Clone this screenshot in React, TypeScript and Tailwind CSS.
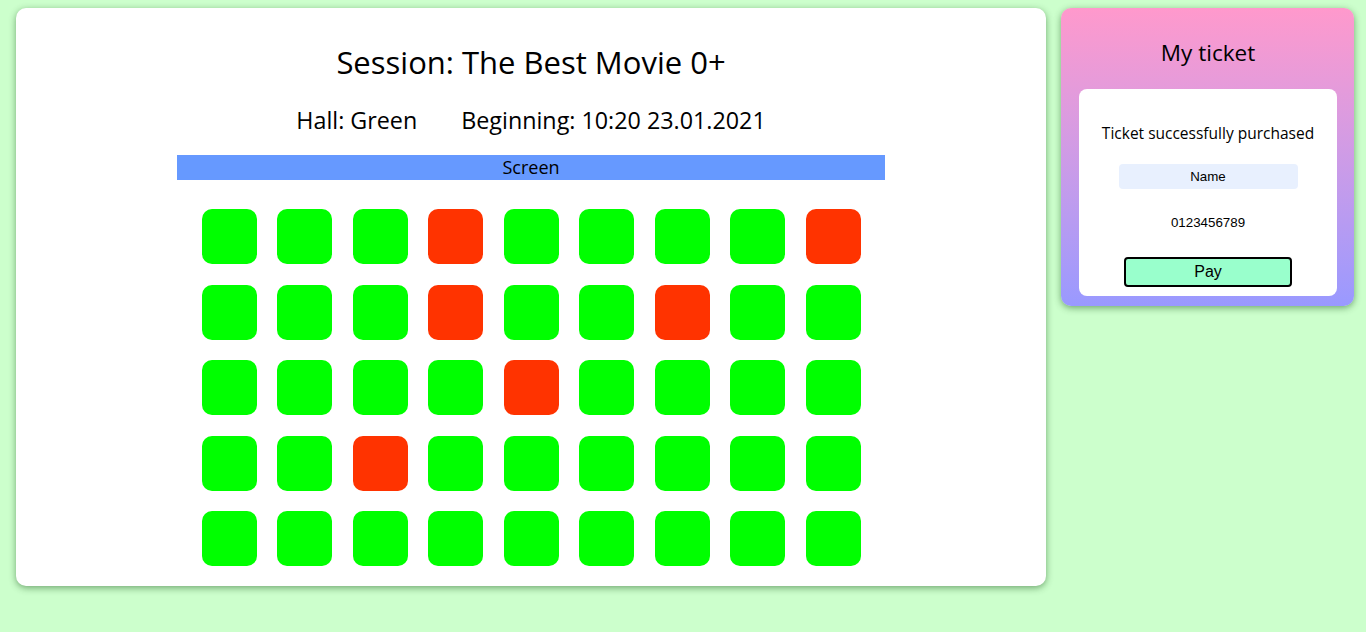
const seatRows: number[][] = [
  [0, 0, 0, 1, 0, 0, 0, 0, 1],
  [0, 0, 0, 1, 0, 0, 1, 0, 0],
  [0, 0, 0, 0, 1, 0, 0, 0, 0],
  [0, 0, 1, 0, 0, 0, 0, 0, 0],
  [0, 0, 0, 0, 0, 0, 0, 0, 0],
];

const Seat = ({ taken }: { taken: boolean }) => (
  <div className={`w-[55px] h-[55px] rounded-[10px] ${taken ? 'bg-[#ff3300]' : 'bg-[#00ff00]'}`} />
);

const SessionCard = () => (
  <div className="w-[1030px] h-[578px] bg-white rounded-[10px] shadow-[0_2px_7px_rgba(0,60,0,0.45)] flex flex-col items-center pt-[34px] font-['Open_Sans',sans-serif] text-black">
    <h1 className="text-[31px] leading-[40px]">Session: The Best Movie 0+</h1>
    <div className="mt-[22px] flex gap-[44px] text-[23.3px] leading-[32px]">
      <span>Hall: Green</span>
      <span>Beginning: 10:20 23.01.2021</span>
    </div>
    <div className="mt-[19px] w-[708px] h-[25px] bg-[#6699ff] flex items-center justify-center text-[18px] leading-[25px]">
      Screen
    </div>
    <div className="mt-[29px] grid grid-cols-9 gap-x-[20.5px] gap-y-[20.5px]">
      {seatRows.map((row, r) =>
        row.map((s, c) => <Seat key={`${r}-${c}`} taken={s === 1} />)
      )}
    </div>
  </div>
);

const TicketCard = () => (
  <div className="w-[293px] rounded-[10px] bg-gradient-to-b from-[#ff99cc] to-[#9999ff] shadow-[0_2px_7px_rgba(0,60,0,0.45)] pt-[30px] pb-[10px] pl-[18px] pr-[17px] font-['Open_Sans',sans-serif] text-black">
    <h2 className="text-center text-[22.5px] leading-[30px]">My ticket</h2>
    <div className="mt-[21px] bg-white rounded-[8px] flex flex-col items-center pt-[32px] pb-[9px]">
      <p className="text-[15.5px] leading-[24px]">Ticket successfully purchased</p>
      <div className="mt-[19px] w-[179px] h-[25px] rounded-[4px] bg-[#e8f0fe] flex items-center justify-center font-['Liberation_Sans',Arial,sans-serif] text-[13.33px]">
        Name
      </div>
      <div className="mt-[26px] font-['Liberation_Sans',Arial,sans-serif] text-[13.33px] leading-[16px]">0123456789</div>
      <button className="mt-[26px] w-[168px] h-[30px] border-2 border-black rounded-[4px] bg-[#99ffcc] font-['Liberation_Sans',Arial,sans-serif] text-[16px] leading-[20px]">
        Pay
      </button>
    </div>
  </div>
);

export default function App() {
  return (
    <div className="min-h-[632px] bg-[#ccffcc] flex items-start gap-[15px] pt-[8px] pl-[16px]">
      <SessionCard />
      <TicketCard />
    </div>
  );
}
